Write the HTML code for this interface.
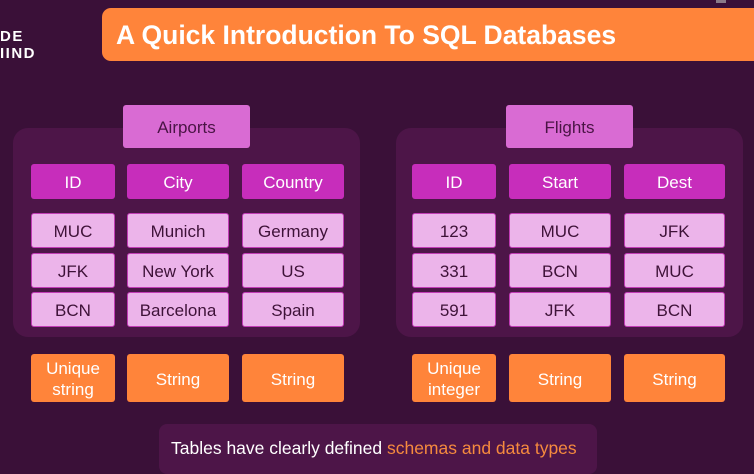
<!DOCTYPE html>
<html><head><meta charset="utf-8"><style>
*{margin:0;padding:0;box-sizing:border-box}
body{width:754px;height:465px;overflow:hidden;background:#3a1038;font-family:"Liberation Sans",sans-serif;position:relative}
.a{position:absolute}
.title{left:102px;top:8px;width:680px;height:53px;background:#ff843a;border-radius:9px;color:#fff;font-weight:bold;font-size:26.5px;padding-left:14px;line-height:54px}
.panel{background:#4d1548;border-radius:15px;top:128px;height:209px}
.tab{background:#d96bd3;border-radius:3px;top:105px;height:43px;color:#4a1445;font-size:17px;text-align:center;line-height:45px}
.c{display:flex;align-items:center;justify-content:center;text-align:center;font-size:17px;border-radius:3px;padding-top:2px}
.h{background:#c72dbb;color:#fff;top:164px;height:35px}
.d{background:#ecb4ea;border:1.5px solid #c23cb6;color:#3e1238;height:35px}
.o{background:#ff843a;color:#fff;top:354px;height:48px;line-height:21px}
.logo{color:#fff;font-weight:bold;font-size:15px;letter-spacing:1.5px;left:0;line-height:17px}
</style></head><body>
<div class="a logo" style="top:28px">DE<br>IIND</div>
<div class="a" style="left:716px;top:0;width:10px;height:3px;background:#8a7a88"></div>
<div class="a title">A Quick Introduction To SQL Databases</div>

<div class="a panel" style="left:13px;width:347px"></div>
<div class="a tab" style="left:123px;width:127px">Airports</div>
<div class="a c h" style="left:31px;width:84px">ID</div>
<div class="a c h" style="left:127px;width:102px">City</div>
<div class="a c h" style="left:242px;width:102px">Country</div>
<div class="a c d" style="left:31px;width:84px;top:213px">MUC</div>
<div class="a c d" style="left:127px;width:102px;top:213px">Munich</div>
<div class="a c d" style="left:242px;width:102px;top:213px">Germany</div>
<div class="a c d" style="left:31px;width:84px;top:253px">JFK</div>
<div class="a c d" style="left:127px;width:102px;top:253px">New York</div>
<div class="a c d" style="left:242px;width:102px;top:253px">US</div>
<div class="a c d" style="left:31px;width:84px;top:292px">BCN</div>
<div class="a c d" style="left:127px;width:102px;top:292px">Barcelona</div>
<div class="a c d" style="left:242px;width:102px;top:292px">Spain</div>
<div class="a c o" style="left:31px;width:84px">Unique<br>string</div>
<div class="a c o" style="left:127px;width:102px">String</div>
<div class="a c o" style="left:242px;width:102px">String</div>

<div class="a panel" style="left:396px;width:347px"></div>
<div class="a tab" style="left:506px;width:127px">Flights</div>
<div class="a c h" style="left:412px;width:84px">ID</div>
<div class="a c h" style="left:509px;width:102px">Start</div>
<div class="a c h" style="left:624px;width:101px">Dest</div>
<div class="a c d" style="left:412px;width:84px;top:213px">123</div>
<div class="a c d" style="left:509px;width:102px;top:213px">MUC</div>
<div class="a c d" style="left:624px;width:101px;top:213px">JFK</div>
<div class="a c d" style="left:412px;width:84px;top:253px">331</div>
<div class="a c d" style="left:509px;width:102px;top:253px">BCN</div>
<div class="a c d" style="left:624px;width:101px;top:253px">MUC</div>
<div class="a c d" style="left:412px;width:84px;top:292px">591</div>
<div class="a c d" style="left:509px;width:102px;top:292px">JFK</div>
<div class="a c d" style="left:624px;width:101px;top:292px">BCN</div>
<div class="a c o" style="left:412px;width:84px">Unique<br>integer</div>
<div class="a c o" style="left:509px;width:102px">String</div>
<div class="a c o" style="left:624px;width:101px">String</div>

<div class="a" style="left:159px;top:424px;width:438px;height:50px;background:#4d1548;border-radius:8px;color:#fff;font-size:17.5px;padding:14px 0 0 12px;white-space:nowrap">Tables have clearly defined <span style="color:#f58a3e">schemas and data types</span></div>
</body></html>
